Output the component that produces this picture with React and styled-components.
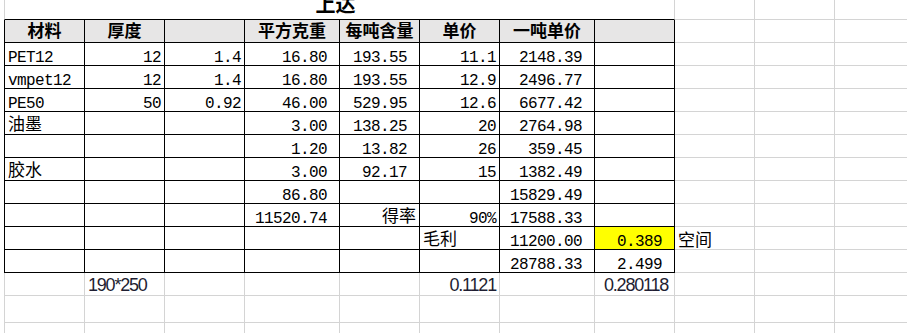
import React from 'react';
import styled, { createGlobalStyle, css } from 'styled-components';

const Global = createGlobalStyle`
  html, body { margin: 0; padding: 0; background: #fff; overflow: hidden; }
  #root { width: 907px; height: 333px; overflow: hidden; }
`;

const GRID = '#d4d4d4';
const INK = '#000';

const Sheet = styled.div`
  display: grid;
  grid-template-columns: 81px 80px 80px 95px 80px 80px 95px 80px 80px 80px 80px;
  grid-template-rows: 30px repeat(12, 23px) 27px 27px;
  margin: -10px 0 0 4px;
  width: max-content;
`;

const kinds = {
  mono: css`
    font-family: "Liberation Mono", monospace;
    font-size: 16px;
    letter-spacing: -0.6px;
    line-height: 14px;
    padding-top: 8px;
  `,
  cjk: css`
    font-family: "Noto Sans CJK SC", sans-serif;
    font-size: 17px;
    line-height: 17px;
    padding-top: 2px;
  `,
  note: css`
    font-family: "Noto Sans CJK SC", sans-serif;
    font-size: 17px;
    line-height: 17px;
    padding-top: 3px;
  `,
  head: css`
    font-family: "Noto Sans CJK SC", sans-serif;
    font-size: 17px;
    font-weight: 700;
    line-height: 17px;
    padding-top: 1px;
  `,
  calc: css`
    font-family: "Liberation Sans", sans-serif;
    font-size: 18px;
    letter-spacing: -1.2px;
    line-height: 19px;
    padding-top: 3px;
    color: #1e1e32;
  `,
};

const Cell = styled.div`
  box-sizing: border-box;
  display: flex;
  align-items: flex-start;
  justify-content: ${(p) =>
    p.$align === 'right' ? 'flex-end' : p.$align === 'center' ? 'center' : 'flex-start'};
  border-right: 1px solid ${(p) => (p.$boxed ? INK : GRID)};
  border-bottom: 1px solid ${(p) => (p.$boxed ? INK : GRID)};
  border-left: ${(p) => (p.$first ? `1px solid ${p.$boxed ? INK : GRID}` : 'none')};
  background: ${(p) => p.$bg || 'transparent'};
  padding-left: ${(p) => (p.$pl != null ? p.$pl : 3)}px;
  padding-right: ${(p) => (p.$trail ? 12 : 3)}px;
  white-space: nowrap;
  color: #000;
  ${(p) => kinds[p.$kind || 'mono']}
`;

const TitleCell = styled.div`
  box-sizing: border-box;
  grid-column: 1 / span 8;
  display: flex;
  justify-content: center;
  align-items: flex-end;
  border-left: 1px solid ${GRID};
  border-right: 1px solid ${GRID};
  border-bottom: 1px solid ${INK};
  padding: 0 8px 5px 0;
  font-family: "Noto Sans CJK SC", sans-serif;
  font-size: 20px;
  font-weight: 700;
  line-height: 20px;
  color: #000;
`;

const isCjk = (s) => /[\u4e00-\u9fff]/.test(s);

const headers = ['材料', '厚度', '', '平方克重', '每吨含量', '单价', '一吨单价', ''];

const colDefaults = [
  { a: 'left' },
  { a: 'right' },
  { a: 'right' },
  { a: 'right', trail: true },
  { a: 'right', trail: true },
  { a: 'right' },
  { a: 'right', trail: true },
  { a: 'right', trail: true },
];

const body = [
  ['PET12', '12', '1.4', '16.80', '193.55', '11.1', '2148.39', ''],
  ['vmpet12', '12', '1.4', '16.80', '193.55', '12.9', '2496.77', ''],
  ['PE50', '50', '0.92', '46.00', '529.95', '12.6', '6677.42', ''],
  ['油墨', '', '', '3.00', '138.25', '20', '2764.98', ''],
  ['', '', '', '1.20', '13.82', '26', '359.45', ''],
  ['胶水', '', '', '3.00', '92.17', '15', '1382.49', ''],
  ['', '', '', '86.80', '', '', '15829.49', ''],
  ['', '', '', '11520.74', { t: '得率', a: 'right', trail: false }, '90%', '17588.33', ''],
  ['', '', '', '', '', { t: '毛利', a: 'left' }, '11200.00', { t: '0.389', bg: '#ffff00' }],
  ['', '', '', '', '', '', '28788.33', '2.499'],
];

const sideNotes = { 8: '空间' };

const calcRow = [
  null,
  { t: '190*250', a: 'left' },
  null,
  null,
  null,
  { t: '0.1121', a: 'right' },
  null,
  { t: '0.280118', a: 'left', pl: 9 },
  null,
  null,
  null,
];

const Blank = ({ first }) => <Cell $first={first} />;

export default function App() {
  return (
    <>
      <Global />
      <Sheet>
        <TitleCell>上达</TitleCell>
        <Blank />
        <Blank />
        <Blank />

        {headers.map((h, i) => (
          <Cell key={`h${i}`} $boxed $first={i === 0} $bg="#e7e6e6" $align="center" $kind="head">
            {h}
          </Cell>
        ))}
        <Blank />
        <Blank />
        <Blank />

        {body.map((row, r) => (
          <React.Fragment key={`r${r}`}>
            {row.map((raw, c) => {
              const spec = typeof raw === 'string' ? { t: raw } : raw;
              const d = { ...colDefaults[c], ...spec };
              return (
                <Cell
                  key={c}
                  $boxed
                  $first={c === 0}
                  $align={d.a}
                  $trail={d.trail}
                  $bg={d.bg}
                  $kind={isCjk(d.t) ? 'cjk' : 'mono'}
                >
                  {d.t}
                </Cell>
              );
            })}
            {sideNotes[r] ? (
              <Cell $align="left" $kind="note">
                {sideNotes[r]}
              </Cell>
            ) : (
              <Blank />
            )}
            <Blank />
            <Blank />
          </React.Fragment>
        ))}

        {calcRow.map((spec, c) =>
          spec ? (
            <Cell key={`c${c}`} $first={c === 0} $align={spec.a} $pl={spec.pl} $kind="calc">
              {spec.t}
            </Cell>
          ) : (
            <Blank key={`c${c}`} first={c === 0} />
          )
        )}

        {[0, 1].map((r) =>
          Array.from({ length: 11 }, (_, c) => <Blank key={`e${r}-${c}`} first={c === 0} />)
        )}
      </Sheet>
    </>
  );
}
